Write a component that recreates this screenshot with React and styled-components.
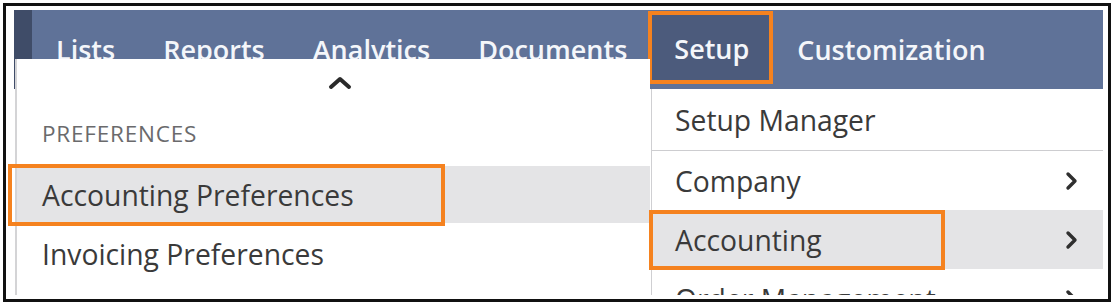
import React from 'react'
import styled, { createGlobalStyle } from 'styled-components'

const Global = createGlobalStyle`
  body {
    margin: 0;
    background: #fff;
    font-family: "Open Sans", "Noto Sans", sans-serif;
  }
`

// cadre noir autour de la capture
const Frame = styled.div`
  box-sizing: border-box;
  width: 1108px;
  height: 299px;
  margin: 3px 0 0 3px;
  border: 3px solid #111;
  padding: 4px 0 0 2px;
  background: #fff;
`

const Viewport = styled.div`
  position: relative;
  width: 1097px;
  height: 285px;
  overflow: hidden;
`

const NavBar = styled.nav`
  display: flex;
  align-items: stretch;
  width: 1089px;
  height: 79px;
  margin-left: 6px;
  background: #5f7298;
`

const Strip = styled.div`
  width: 18px;
  background: #3f4c68;
`

const NavItem = styled.div`
  display: flex;
  align-items: center;
  padding: 0 24px;
  color: #f4f6fa;
  font-size: 27px;
  font-weight: 600;
  white-space: nowrap;
`

const ActiveTab = styled(NavItem)`
  box-sizing: border-box;
  margin: 1px 0 5px -3px;
  padding: 2px 20px 0 22px;
  border: 4px solid #f5821f;
  background: #4c5b7c;
`

const LeftMenu = styled.div`
  position: absolute;
  left: 7px;
  top: 49px;
  box-sizing: border-box;
  width: 635px;
  height: 260px;
  border-left: 2px solid #d4d4d6;
  background: #fff;
  color: #3a3a3a;
`

const RightMenu = styled.div`
  position: absolute;
  left: 643px;
  top: 79px;
  box-sizing: border-box;
  width: 452px;
  height: 240px;
  border-left: 1px solid #cfcfd2;
  background: #fff;
  color: #3a3a3a;
`

const ScrollUp = styled.div`
  display: flex;
  justify-content: center;
  align-items: center;
  height: 48px;
  padding-left: 12px;
`

const GroupTitle = styled.div`
  display: flex;
  align-items: center;
  height: 59px;
  padding: 0 25px 6px;
  box-sizing: border-box;
  font-size: 22.5px;
  color: #6a6a6c;
  letter-spacing: 0.8px;
`

const Row = styled.div`
  position: relative;
  display: flex;
  align-items: center;
  justify-content: space-between;
  box-sizing: border-box;
  height: ${p => p.$h || 59}px;
  padding: 0 24px 0 ${p => p.$pad || 23}px;
  font-size: 28.3px;
  background: ${p => (p.$hover ? '#e4e4e6' : 'transparent')};
  border-bottom: ${p => (p.$divider ? '1px solid #cdcdd0' : 'none')};
  white-space: nowrap;
`

const Mark = styled.div`
  position: absolute;
  left: ${p => p.$x}px;
  top: ${p => p.$y}px;
  width: ${p => p.$w}px;
  height: ${p => p.$h}px;
  box-sizing: border-box;
  border: 4px solid #f5821f;
  pointer-events: none;
`

const Chevron = () => (
  <svg width="14" height="20" viewBox="0 0 14 20">
    <path d="M3 3 L10 10 L3 17" fill="none" stroke="#2f2f2f" strokeWidth="3.4" strokeLinecap="round" strokeLinejoin="round" />
  </svg>
)

const ChevronUp = () => (
  <svg width="24" height="14" viewBox="0 0 24 14">
    <path d="M3 11 L12 3 L21 11" fill="none" stroke="#2a2a2a" strokeWidth="4" strokeLinecap="round" strokeLinejoin="round" />
  </svg>
)

const tabs = ['Lists', 'Reports', 'Analytics', 'Documents']

export default function App() {
  return (
    <>
      <Global />
      <Frame>
        <Viewport>
          <NavBar>
            <Strip />
            {tabs.map(t => (
              <NavItem key={t}>{t}</NavItem>
            ))}
            <ActiveTab>Setup</ActiveTab>
            <NavItem>Customization</NavItem>
          </NavBar>

          <LeftMenu>
            <ScrollUp><ChevronUp /></ScrollUp>
            <GroupTitle>PREFERENCES</GroupTitle>
            <Row $hover $h={57} $pad={25}>
              Accounting Preferences
              <Mark $x={-9} $y={-2} $w={437} $h={62} />
            </Row>
            <Row $h={62} $pad={25}>Invoicing Preferences</Row>
          </LeftMenu>

          <RightMenu>
            <Row $h={62} $divider>Setup Manager</Row>
            <Row>Company <Chevron /></Row>
            <Row $hover>
              Accounting <Chevron />
              <Mark $x={-3} $y={0} $w={296} $h={60} />
            </Row>
            <Row>Order Management <Chevron /></Row>
          </RightMenu>
        </Viewport>
      </Frame>
    </>
  )
}
